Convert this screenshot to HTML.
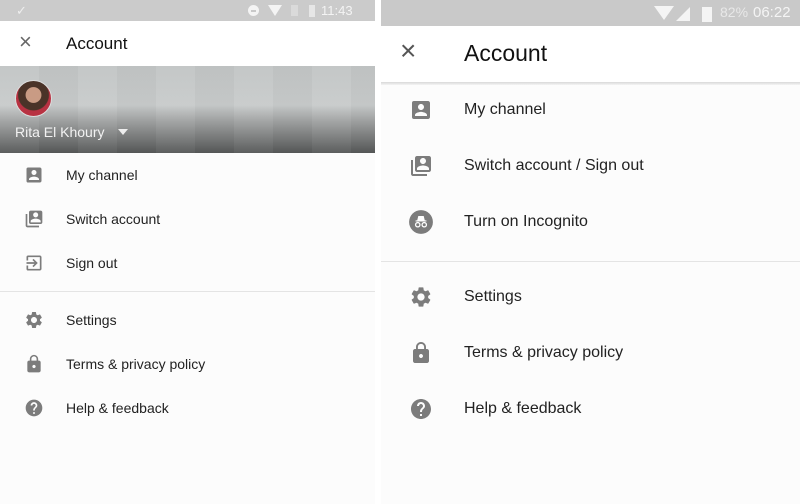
<!DOCTYPE html>
<html><head><meta charset="utf-8"><style>
*{margin:0;padding:0;box-sizing:border-box}
body{width:800px;height:504px;background:#fff;position:relative;overflow:hidden;font-family:"Liberation Sans",Arial,sans-serif;color:#222}
.abs{position:absolute}
.t{position:absolute;white-space:nowrap;color:#222}
.L .t{font-size:14px;left:66px}
.R .t{font-size:16px;left:464px}
svg.i{position:absolute;fill:#7c7c7c}
</style></head><body>
<svg width="0" height="0" style="position:absolute">
<defs>
<symbol id="acc" viewBox="0 0 24 24"><path d="M3 5v14a2 2 0 0 0 2 2h14c1.1 0 2-.9 2-2V5c0-1.1-.9-2-2-2H5a2 2 0 0 0-2 2zm12 4c0 1.66-1.34 3-3 3s-3-1.34-3-3 1.34-3 3-3 3 1.34 3 3zm-9 8c0-2 4-3.1 6-3.1s6 1.1 6 3.1v1H6v-1z"/></symbol>
<symbol id="sw" viewBox="0 0 24 24"><path d="M4 6H2v14c0 1.1.9 2 2 2h14v-2H4V6zm16-4H8c-1.1 0-2 .9-2 2v12c0 1.1.9 2 2 2h12c1.1 0 2-.9 2-2V4c0-1.1-.9-2-2-2zm-6 2c1.66 0 3 1.34 3 3s-1.34 3-3 3-3-1.34-3-3 1.34-3 3-3zm6 12H8v-1.5c0-1.99 4-3 6-3s6 1.01 6 3V16z"/></symbol>
<symbol id="out" viewBox="0 0 24 24"><path d="M10.09 15.59L11.5 17l5-5-5-5-1.41 1.41L12.67 11H3v2h9.67l-2.58 2.59zM19 3H5a2 2 0 0 0-2 2v4h2V5h14v14H5v-4H3v4a2 2 0 0 0 2 2h14c1.1 0 2-.9 2-2V5c0-1.1-.9-2-2-2z"/></symbol>
<symbol id="set" viewBox="0 0 24 24"><path d="M19.14 12.94c.04-.3.06-.61.06-.94 0-.32-.02-.64-.07-.94l2.03-1.58a.49.49 0 0 0 .12-.61l-1.92-3.32a.488.488 0 0 0-.59-.22l-2.39.96c-.5-.38-1.03-.7-1.62-.94l-.36-2.54a.484.484 0 0 0-.48-.41h-3.84c-.24 0-.43.17-.47.41l-.36 2.54c-.59.24-1.130.57-1.62.94l-2.39-.96c-.22-.08-.47 0-.59.22L2.74 8.87c-.12.21-.08.47.12.61l2.03 1.58c-.05.3-.09.63-.09.94s.02.64.07.94l-2.030 1.58a.49.49 0 0 0-.12.61l1.92 3.32c.12.22.37.29.59.22l2.39-.96c.5.38 1.03.7 1.62.94l.36 2.54c.05.24.24.41.48.41h3.840c.24 0 .44-.17.47-.41l.36-2.54c.59-.24 1.13-.56 1.62-.94l2.39.96c.22.08.47 0 .59-.22l1.92-3.32c.12-.22.07-.47-.12-.61l-2.01-1.58zM12 15.6c-1.98 0-3.6-1.62-3.6-3.6s1.62-3.6 3.6-3.6 3.6 1.62 3.6 3.6-1.62 3.6-3.6 3.6z"/></symbol>
<symbol id="lock" viewBox="0 0 24 24"><path d="M18 8h-1V6c0-2.76-2.24-5-5-5S7 3.240 7 6v2H6c-1.1 0-2 .9-2 2v10c0 1.1.9 2 2 2h12c1.1 0 2-.9 2-2V10c0-1.1-.9-2-2-2zm-6 9c-1.1 0-2-.9-2-2s.9-2 2-2 2 .9 2 2-.9 2-2 2zm3.1-9H8.9V6c0-1.71 1.39-3.1 3.1-3.1 1.71 0 3.1 1.39 3.1 3.1v2z"/></symbol>
<symbol id="help" viewBox="0 0 24 24"><path d="M12 2C6.48 2 2 6.48 2 12s4.48 10 10 10 10-4.48 10-10S17.52 2 12 2zm1 17h-2v-2h2v2zm2.07-7.75l-.9.92C13.45 12.9 13 13.5 13 15h-2v-.5c0-1.1.45-2.1 1.17-2.83l1.24-1.26c.37-.36.59-.86.59-1.410 0-1.1-.9-2-2-2s-2 .9-2 2H8c0-2.21 1.79-4 4-4s4 1.79 4 4c0 .88-.36 1.68-.93 2.25z"/></symbol>
<symbol id="inc" viewBox="0 0 24 24"><circle cx="12" cy="12" r="11"/><path fill="#fff" d="M7 10.5h10v1H7zM8.5 10.5l1-4h5l1 4z"/><circle cx="9" cy="14.5" r="2" fill="none" stroke="#fff" stroke-width="1.2"/><circle cx="15" cy="14.5" r="2" fill="none" stroke="#fff" stroke-width="1.2"/></symbol>
</defs></svg>

<!-- LEFT -->
<div class="L">
<div class="abs" style="left:0;top:0;width:375px;height:21px;background:#cbcbcb"></div>
<div class="abs" style="left:16px;top:3px;color:#eee;font-size:13px">✓</div>
<div class="abs" style="left:248px;top:5px;width:11px;height:11px;border-radius:50%;background:#f4f4f4"></div>
<div class="abs" style="left:251px;top:10px;width:5px;height:2px;background:#c9c9c9"></div>
<div class="abs" style="left:268px;top:5px;width:0;height:0;border-left:7px solid transparent;border-right:7px solid transparent;border-top:11px solid #f4f4f4"></div>
<div class="abs" style="left:291px;top:5px;width:7px;height:11px;background:#dadada"></div>
<div class="abs" style="left:309px;top:5px;width:6px;height:12px;background:#e6e6e6"></div>
<div class="abs" style="left:321px;top:3px;color:#f4f4f4;font-size:13px">11:43</div>
<div class="abs" style="left:19px;top:29px;font-size:22px;color:#666;font-weight:300">×</div>
<div class="t" style="left:66px;top:34px;font-size:17px;color:#111">Account</div>
<div class="abs" style="left:0;top:66px;width:375px;height:87px;background:linear-gradient(to bottom,#c2c5c5 0%,#c8cbcb 45%,#a3a5a5 62%,#565858 100%)"></div>
<div class="abs" style="left:0;top:66px;width:375px;height:87px;background:repeating-linear-gradient(90deg,rgba(255,255,255,0.035) 0 39px,rgba(0,0,0,0.02) 39px 78px)"></div>
<div class="abs" style="left:15px;top:80px;width:37px;height:37px;border-radius:50%;background:radial-gradient(circle at 50% 40%,#c99b84 0 28%,#4a3328 30% 55%,#b83242 58%);border:1px solid #ddd"></div>
<div class="abs" style="left:15px;top:124px;color:#f2f2f2;font-size:14px">Rita El Khoury</div>
<div class="abs" style="left:118px;top:129px;width:0;height:0;border-left:5px solid transparent;border-right:5px solid transparent;border-top:6px solid #eee"></div>
<div class="abs" style="left:0;top:153px;width:375px;height:351px;background:#fcfcfc"></div>
<svg class="i" style="left:24px;top:165px" width="20" height="20"><use href="#acc"/></svg>
<div class="t" style="top:167px">My channel</div>
<svg class="i" style="left:24px;top:209px" width="20" height="20"><use href="#sw"/></svg>
<div class="t" style="top:211px">Switch account</div>
<svg class="i" style="left:24px;top:253px" width="20" height="20"><use href="#out"/></svg>
<div class="t" style="top:255px">Sign out</div>
<div class="abs" style="left:0;top:291px;width:375px;height:1px;background:#e4e4e4"></div>
<svg class="i" style="left:24px;top:310px" width="20" height="20"><use href="#set"/></svg>
<div class="t" style="top:312px">Settings</div>
<svg class="i" style="left:24px;top:354px" width="20" height="20"><use href="#lock"/></svg>
<div class="t" style="top:356px">Terms &amp; privacy policy</div>
<svg class="i" style="left:24px;top:398px" width="20" height="20"><use href="#help"/></svg>
<div class="t" style="top:400px">Help &amp; feedback</div>
</div>

<!-- RIGHT -->
<div class="R">
<div class="abs" style="left:381px;top:0;width:419px;height:26px;background:#c9c9c9"></div>
<div class="abs" style="left:654px;top:6px;width:0;height:0;border-left:10px solid transparent;border-right:10px solid transparent;border-top:14px solid #f4f4f4"></div>
<div class="abs" style="left:676px;top:7px;width:0;height:0;border-left:14px solid transparent;border-bottom:14px solid #f4f4f4"></div>
<div class="abs" style="left:702px;top:7px;width:10px;height:15px;background:#f4f4f4"></div>
<div class="abs" style="left:720px;top:4px;color:#e8e8e8;font-size:14px">82%</div>
<div class="abs" style="left:753px;top:4px;color:#f4f4f4;font-size:15px">06:22</div>
<div class="abs" style="left:381px;top:26px;width:419px;height:57px;background:#fff"></div>
<div class="abs" style="left:400px;top:37px;font-size:28px;color:#555;font-weight:300;line-height:1">×</div>
<div class="t" style="left:464px;top:40px;font-size:23px;color:#111">Account</div>
<div class="abs" style="left:381px;top:82px;width:419px;height:3px;background:linear-gradient(#d8d8d8,#f4f4f4)"></div>
<div class="abs" style="left:381px;top:85px;width:419px;height:419px;background:#fcfcfc"></div>
<svg class="i" style="left:409px;top:98px" width="24" height="24"><use href="#acc"/></svg>
<div class="t" style="top:101px">My channel</div>
<svg class="i" style="left:409px;top:154px" width="24" height="24"><use href="#sw"/></svg>
<div class="t" style="top:157px">Switch account / Sign out</div>
<svg class="i" style="left:408px;top:209px" width="26" height="26"><use href="#inc"/></svg>
<div class="t" style="top:213px">Turn on Incognito</div>
<div class="abs" style="left:381px;top:261px;width:419px;height:1px;background:#e4e4e4"></div>
<svg class="i" style="left:409px;top:285px" width="24" height="24"><use href="#set"/></svg>
<div class="t" style="top:288px">Settings</div>
<svg class="i" style="left:409px;top:341px" width="24" height="24"><use href="#lock"/></svg>
<div class="t" style="top:344px">Terms &amp; privacy policy</div>
<svg class="i" style="left:409px;top:397px" width="24" height="24"><use href="#help"/></svg>
<div class="t" style="top:400px">Help &amp; feedback</div>
</div>
</body></html>
